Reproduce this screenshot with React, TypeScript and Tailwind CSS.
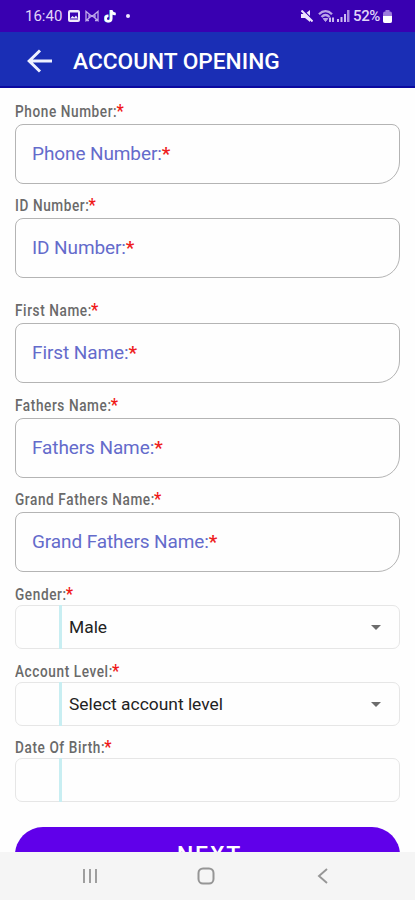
import React from "react";

function Label({ text, className = "" }: { text: string; className?: string }) {
  return (
    <div className={`flex items-center whitespace-nowrap text-[16px] font-medium leading-none text-[#6a6a6a] ${className}`}>
      <span className="inline-block origin-left scale-x-[0.85] tracking-[0.7px]">
        {text}
        <span className="-ml-px text-[19px] font-semibold leading-[0] text-[#f01818]">*</span>
      </span>
    </div>
  );
}

function TextField({ label, className = "" }: { label: string; className?: string }) {
  return (
    <div className={className}>
      <Label text={label} className="h-[22px] pb-[2px]" />
      <div className="flex h-[60px] items-center whitespace-nowrap rounded-[8px] rounded-br-[22px] border-[1.5px] border-[#b4b4b4] pl-[16px] text-[19px] tracking-[-0.1px] text-[#646bcb]">
        {label}
        <span className="font-semibold text-[#ee2020]">*</span>
      </div>
    </div>
  );
}

function SelectField({ label, value, className = "" }: { label: string; value?: string; className?: string }) {
  return (
    <div className={className}>
      <Label text={label} className="h-[20px]" />
      <div className="flex h-[44px] items-stretch rounded-[7px] border border-[#e6e6e6]">
        <div className="-my-px ml-[43px] w-[3px] shrink-0 bg-[#c8eef2]" />
        <div className="flex flex-1 items-center justify-between pl-[7px] pr-[18px] text-[17.4px] text-[#222222]">
          <span>{value}</span>
          {value && (
            <svg width="10" height="5" viewBox="0 0 10 5" fill="#6c6c6c">
              <path d="M0 0h10L5 5z" />
            </svg>
          )}
        </div>
      </div>
    </div>
  );
}

function StatusBar() {
  return (
    <div className="flex h-[32px] shrink-0 items-center bg-[#3900b1] pl-[25px] pr-[23px] text-[15px] text-[#e0d5f8]">
      <span className="w-[43px]">16:40</span>
      <svg width="12" height="12" viewBox="0 0 12 12">
        <rect width="12" height="12" rx="2" fill="#f0eafc" />
        <rect x="2" y="2.5" width="8" height="7" fill="#3900b1" />
        <path d="M2 8.5 4.5 6 6.3 7.5 8 5.5 10 8.5z" fill="#f0eafc" />
      </svg>
      <svg className="ml-[5px]" width="14" height="12" viewBox="0 0 14 12" fill="none" stroke="#bda8ea" strokeWidth="1.3">
        <path d="M1 10.5v-9l6 5 6-5v9L7 5.5zM4 9V4M10 9V4M1 10.5h3M10 10.5h3" />
      </svg>
      <svg className="ml-[5px]" width="13" height="14" viewBox="0 0 13 14" fill="none" strokeWidth="2.5">
        <path d="M6.5 1v8.5a2.8 2.8 0 1 1-2.8-2.8M6.5 1.5c.5 2.4 2 3.4 4.5 3.5" stroke="#55c9e9" />
        <path d="M7.3 1v8.5a2.8 2.8 0 1 1-2.8-2.8M7.3 1.5c.5 2.4 2 3.4 4.5 3.5" stroke="#fff" />
      </svg>
      <span className="ml-[9px] h-[4px] w-[4px] rounded-full bg-[#efe7ff]" />
      <span className="flex-1" />
      <svg width="12" height="12" viewBox="0 0 12 12">
        <path d="M0 4h4l5-4v12L4 8H0z" fill="#ece3fc" />
        <path d="M1.5 -.5 13 11" stroke="#3900b1" strokeWidth="1.3" />
        <path d="M.5 .5 11.5 11.5" stroke="#ece3fc" strokeWidth="2" />
      </svg>
      <svg className="ml-[5px]" width="17" height="13" viewBox="0 0 17 13" fill="none" stroke="#baa4e8" strokeWidth="2.3">
        <path d="M1 4.2c4-4 9-4 13 0M3.5 7c2.5-2.5 5.5-2.5 8 0" />
        <path d="M5.2 8.5 7.5 11.5 9.8 8.5Z" fill="#baa4e8" strokeWidth="1" />
        <path d="M12 7.5v4.5M15 7.5v4.5" stroke="#d9ccf5" strokeWidth="1.8" />
      </svg>
      <svg className="ml-[2px]" width="13" height="12" viewBox="0 0 13 12" fill="#cdbdf0">
        <path d="M0 9h2v3H0zM3.5 7h2v5h-2zM7 4h2v8H7z" />
        <path d="M10 0h2.5v12H10z" fill="#a98ae0" />
      </svg>
      <span className="ml-[3px] w-[30px] whitespace-nowrap font-medium tracking-[-0.4px]">52%</span>
      <svg width="9" height="13" viewBox="0 0 9 13">
        <path d="M2.5 0h4v2h-4z" fill="#9c7bdc" />
        <rect y="1.5" width="9" height="11.5" rx="2" fill="#9c7bdc" />
        <path d="M0 6h9v5a2 2 0 0 1-2 2H2a2 2 0 0 1-2-2z" fill="#fff" />
      </svg>
    </div>
  );
}

export default function App() {
  return (
    <div className="flex h-[900px] w-[415px] flex-col overflow-hidden bg-[#fefefe] font-['Roboto',sans-serif]">
      <StatusBar />
      <header className="flex h-[56px] shrink-0 items-center border-b-2 border-[#0b0aa0] bg-[#1a2eb5] pl-[27px] pt-[4px] text-white">
        <svg width="26" height="24" viewBox="0 0 26 24" fill="none" stroke="#eef1ff" strokeWidth="3">
          <path d="M25 12H2M13 1.5 2.2 12 13 22.5" />
        </svg>
        <h1 className="ml-[20px] whitespace-nowrap pt-[2px] text-[22.7px] font-medium">ACCOUNT OPENING</h1>
      </header>
      <main className="flex min-h-0 flex-1 flex-col overflow-hidden px-[15px] pt-[14px]">
        <TextField label="Phone Number:" />
        <TextField label="ID Number:" className="mt-[12px]" />
        <TextField label="First Name:" className="mt-[23px]" />
        <TextField label="Fathers Name:" className="mt-[13px]" />
        <TextField label="Grand Fathers Name:" className="mt-[12px]" />
        <SelectField label="Gender:" value="Male" className="mt-[13px]" />
        <SelectField label="Account Level:" value="Select account level" className="mt-[13px]" />
        <SelectField label="Date Of Birth:" className="mt-[12px]" />
        <button className="mt-[25px] flex h-[56px] shrink-0 items-center justify-center rounded-[28px] bg-[#6000ea] pl-[4px] pt-[3px] text-[23px] font-medium tracking-[1.8px] text-white">
          NEXT
        </button>
      </main>
      <nav className="flex h-[48px] shrink-0 items-center bg-[#f5f5f5] pl-[82px]">
        <svg width="16" height="16" viewBox="0 0 16 16" stroke="#969696" strokeWidth="1.8">
          <path d="M2 1v14M8 1v14M14 1v14" />
        </svg>
        <svg className="ml-[99px]" width="18" height="18" viewBox="0 0 18 18" fill="none" stroke="#969696" strokeWidth="2">
          <rect x="1.5" y="1.5" width="15" height="15" rx="4.5" />
        </svg>
        <svg className="ml-[102px]" width="11" height="16" viewBox="0 0 11 16" fill="none" stroke="#969696" strokeWidth="1.9">
          <path d="M10 1 2 8l8 7" />
        </svg>
      </nav>
    </div>
  );
}
